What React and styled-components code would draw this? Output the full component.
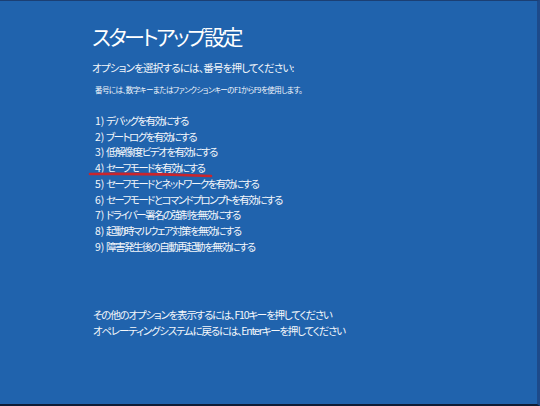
import React from "react";
import styled, { createGlobalStyle } from "styled-components";

const GlobalStyle = createGlobalStyle`
  html, body {
    margin: 0;
    padding: 0;
    background: #0d1a30;
  }
  * {
    box-sizing: border-box;
  }
`;

const Screen = styled.div`
  position: relative;
  width: 540px;
  height: 406px;
  background: #2063ad;
  border-top: 1px solid #1b3f74;
  border-right: 3px solid #1d4a8a;
  border-bottom: 2px solid #0e1c35;
  padding: 21px 0 0 92px;
  color: #f4f7fb;
  font-family: "Noto Sans CJK JP", "Noto Sans", sans-serif;
  font-feature-settings: "palt";
  display: flex;
  flex-direction: column;
  overflow: hidden;
`;

const Title = styled.h1`
  margin: 0;
  font-size: 21px;
  font-weight: 400;
  line-height: 28px;
  letter-spacing: -2.5px;
  color: #ffffff;
`;

const Prompt = styled.p`
  margin: 11px 0 0;
  font-size: 10.5px;
  line-height: 14px;
  letter-spacing: -0.8px;
`;

const Hint = styled.p`
  margin: 10px 0 0 3px;
  font-size: 7.5px;
  line-height: 10px;
  letter-spacing: -0.55px;
`;

const OptionList = styled.ol`
  position: relative;
  list-style: none;
  margin: 18px 0 0 3px;
  padding: 0;
  display: flex;
  flex-direction: column;
`;

const Option = styled.li`
  display: flex;
  font-size: 10.5px;
  line-height: 15.7px;
  white-space: nowrap;
`;

const Num = styled.span`
  width: 11px;
  letter-spacing: 0;
`;

const Label = styled.span`
  letter-spacing: -1.55px;
`;

const Mark = styled.svg`
  position: absolute;
  left: -7px;
  top: 58px;
  width: 126px;
  height: 8px;
  pointer-events: none;
`;

const Footer = styled.div`
  margin: auto 0 0 1px;
  padding-bottom: 66px;
  display: flex;
  flex-direction: column;
`;

const FooterLine = styled.p`
  margin: 0;
  font-size: 10.5px;
  line-height: 15.5px;
  letter-spacing: -1.2px;
`;

const options = [
  "デバッグを有効にする",
  "ブートログを有効にする",
  "低解像度ビデオを有効にする",
  "セーフモードを有効にする",
  "セーフモードとネットワークを有効にする",
  "セーフモードとコマンドプロンプトを有効にする",
  "ドライバー署名の強制を無効にする",
  "起動時マルウェア対策を無効にする",
  "障害発生後の自動再起動を無効にする",
];

const App = () => {
  return (
    <>
      <GlobalStyle />
      <Screen>
        <Title>スタートアップ設定</Title>
        <Prompt>オプションを選択するには、番号を押してください:</Prompt>
        <Hint>番号には、数字キーまたはファンクションキーのF1からF9を使用します。</Hint>
        <OptionList>
          {options.map((text, i) => (
            <Option key={i}>
              <Num>{i + 1})</Num>
              <Label>{text}</Label>
            </Option>
          ))}
          <Mark viewBox="0 0 126 8">
            <path
              d="M2 3 C 40 2.5, 90 3.5, 123 5"
              stroke="#c9252d"
              strokeWidth="2.6"
              strokeLinecap="round"
              fill="none"
            />
          </Mark>
        </OptionList>
        <Footer>
          <FooterLine>その他のオプションを表示するには、F10キーを押してください</FooterLine>
          <FooterLine>オペレーティングシステムに戻るには、Enterキーを押してください</FooterLine>
        </Footer>
      </Screen>
    </>
  );
};

export default App;
